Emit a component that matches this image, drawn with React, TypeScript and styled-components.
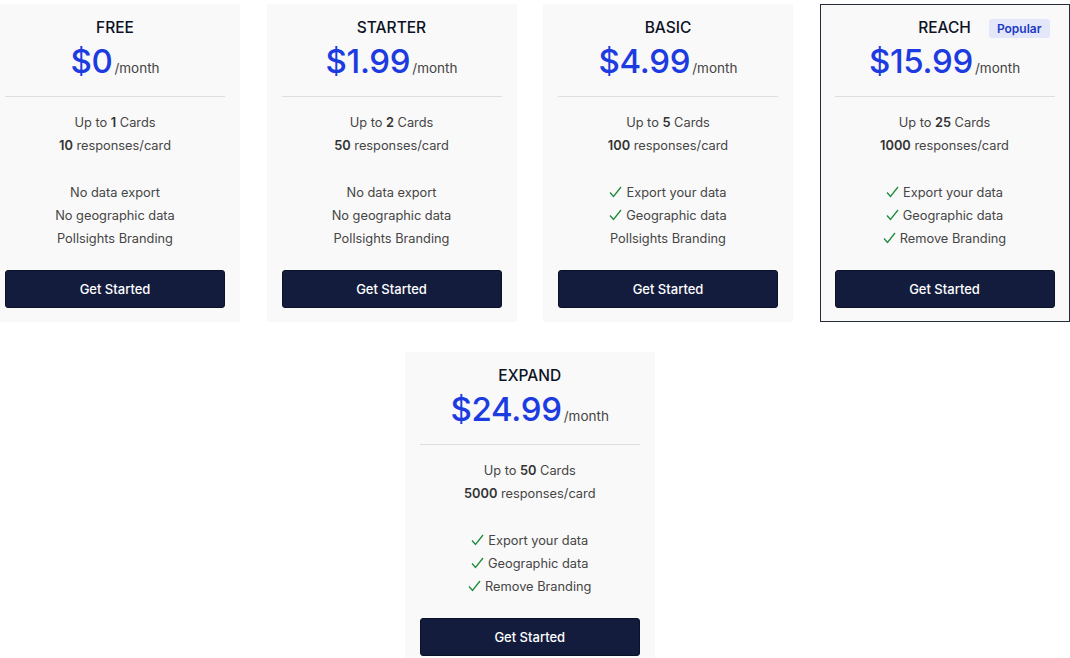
import styled, { createGlobalStyle } from "styled-components";

interface Plan {
    name: string;
    price: string;
    cards: number;
    responses: number;
    exportData: boolean;
    geoData: boolean;
    removeBranding: boolean;
    popular?: boolean;
}

const plans: Plan[] = [
    { name: "FREE", price: "$0", cards: 1, responses: 10, exportData: false, geoData: false, removeBranding: false },
    { name: "STARTER", price: "$1.99", cards: 2, responses: 50, exportData: false, geoData: false, removeBranding: false },
    { name: "BASIC", price: "$4.99", cards: 5, responses: 100, exportData: true, geoData: true, removeBranding: false },
    { name: "REACH", price: "$15.99", cards: 25, responses: 1000, exportData: true, geoData: true, removeBranding: true, popular: true },
    { name: "EXPAND", price: "$24.99", cards: 50, responses: 5000, exportData: true, geoData: true, removeBranding: true },
];

const GlobalStyle = createGlobalStyle`
    body {
        margin: 0;
        background: #ffffff;
        font-family: Inter, "Noto Sans", sans-serif;
        overflow: hidden;
    }
`;

const Check = () => (
    <StyledCheck width="13" height="12" viewBox="0 0 13 12">
        <polyline points="1,6.5 4.5,10.5 12,1" fill="none" stroke="#1f8a3c" strokeWidth="1.3" />
    </StyledCheck>
);

const Feature = ({ ok, yes, no }: { ok: boolean; yes: string; no: string }) => (
    <StyledLine>
        {ok && <Check />}
        {ok ? yes : no}
    </StyledLine>
);

const PlanCard = ({ plan }: { plan: Plan }) => (
    <StyledCard $highlight={plan.popular}>
        {plan.popular && <StyledBadge>Popular</StyledBadge>}
        <StyledTitle>{plan.name}</StyledTitle>
        <StyledPriceRow>
            <StyledPrice>{plan.price}</StyledPrice>
            <StyledPer>/month</StyledPer>
        </StyledPriceRow>
        <StyledDivider />
        <StyledFeatures>
            <StyledLine>
                Up to <b>{plan.cards}</b> Cards
            </StyledLine>
            <StyledLine>
                <b>{plan.responses}</b> responses/card
            </StyledLine>
            <StyledSpacer />
            <Feature ok={plan.exportData} yes="Export your data" no="No data export" />
            <Feature ok={plan.geoData} yes="Geographic data" no="No geographic data" />
            <Feature ok={plan.removeBranding} yes="Remove Branding" no="Pollsights Branding" />
        </StyledFeatures>
        <StyledButton>Get Started</StyledButton>
    </StyledCard>
);

export default function App() {
    return (
        <>
            <GlobalStyle />
            <StyledGrid>
                {plans.map((plan) => (
                    <PlanCard key={plan.name} plan={plan} />
                ))}
            </StyledGrid>
        </>
    );
}

const StyledGrid = styled.div`
    display: flex;
    flex-wrap: wrap;
    justify-content: center;
    column-gap: 26.5px;
    row-gap: 30px;
    width: 1079.5px;
    margin-left: -10px;
    padding-top: 4px;
`;

const StyledCard = styled.div<{ $highlight?: boolean }>`
    position: relative;
    box-sizing: border-box;
    width: 250px;
    padding: 12px 14px 13px;
    background: #f9f9f9;
    border: 1px solid ${(p) => (p.$highlight ? "#262c3a" : "transparent")};
    display: flex;
    flex-direction: column;
    align-items: stretch;
    text-align: center;
`;

const StyledBadge = styled.div`
    position: absolute;
    top: 14px;
    right: 19px;
    padding: 2px 8px;
    background: #e4e7fa;
    color: #1c3bc4;
    font-size: 12px;
    font-weight: 600;
    line-height: 15px;
    border-radius: 3px;
`;

const StyledTitle = styled.div`
    font-size: 15.5px;
    font-weight: 500;
    line-height: 22px;
    color: #0d1224;
`;

const StyledPriceRow = styled.div`
    display: flex;
    justify-content: center;
    align-items: baseline;
    margin-top: 3px;
`;

const StyledPrice = styled.span`
    font-size: 33px;
    font-weight: 500;
    line-height: 38px;
    color: #1c3be0;
    letter-spacing: -0.3px;
`;

const StyledPer = styled.span`
    font-size: 13.5px;
    color: #444;
    margin-left: 2px;
`;

const StyledDivider = styled.div`
    height: 1px;
    background: #dedede;
    margin-top: 16px;
`;

const StyledFeatures = styled.div`
    display: flex;
    flex-direction: column;
    margin-top: 14px;
`;

const StyledLine = styled.div`
    font-size: 12.8px;
    line-height: 23.3px;
    color: #454545;
    white-space: nowrap;

    b {
        font-weight: 600;
        color: #333;
    }
`;

const StyledSpacer = styled.div`
    height: 23.3px;
`;

const StyledCheck = styled.svg`
    display: inline-block;
    vertical-align: -1px;
    margin-right: 4px;
`;

const StyledButton = styled.button`
    margin-top: 19px;
    height: 38px;
    border: 1px solid #0b1128;
    border-radius: 3px;
    background: #141c3e;
    color: #ffffff;
    font-family: Inter, "Noto Sans", sans-serif;
    font-size: 13px;
    font-weight: 500;
    cursor: pointer;
`;
